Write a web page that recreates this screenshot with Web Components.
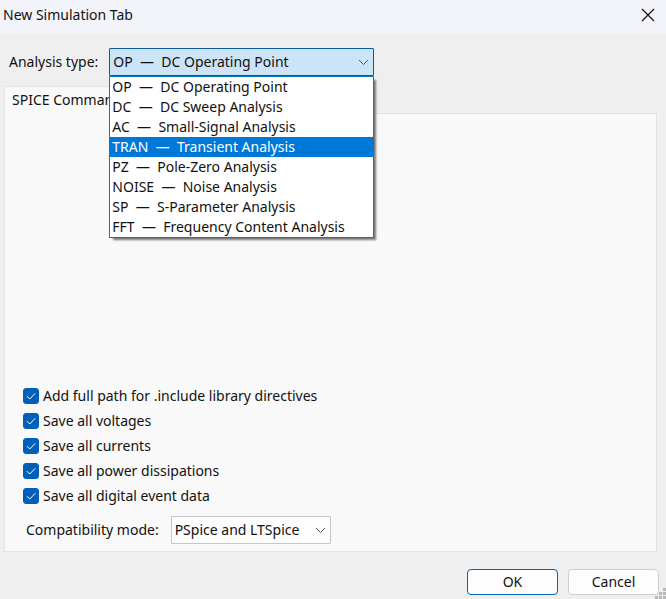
<!DOCTYPE html>
<html lang="en">
<head>
<meta charset="utf-8">
<title>New Simulation Tab</title>
<style>
html, body { height: 100%; }
body { margin: 0; background: #efefef; color: #111; font: 14px/20px "Noto Sans", "Open Sans", sans-serif; }
simulation-dialog { height: 100%; }
</style>
</head>
<body>
<simulation-dialog></simulation-dialog>
<script>
const define = (name, html, setup) => {
  const template = document.createElement('template');
  template.innerHTML = '<style>*{box-sizing:border-box}button,input,select{font:inherit;color:inherit;margin:0}</style>' + html;
  customElements.define(name, class extends HTMLElement {
    connectedCallback() {
      if (this.shadowRoot) return;
      const root = this.attachShadow({ mode: 'open' });
      root.append(template.content.cloneNode(true));
      if (setup) setup(this, root);
    }
  });
};

define('title-bar', `
<style>
:host { display: flex; align-items: center; justify-content: space-between; height: 34px; padding: 0 9px 4px 3px; background: #f3f4f9; }
h1 { margin: 0; font-size: 14px; line-height: 20px; font-weight: 400; }
button { display: flex; padding: 2px; border: 0; background: none; }
svg { fill: none; stroke: #111; stroke-width: 1.2; }
</style>
<h1><slot></slot></h1>
<button aria-label="Close"><svg width="14" height="14"><path d="M1 1L13 13M13 1L1 13"/></svg></button>`);

define('combo-box', `
<style>
:host { display: flex; align-items: center; gap: 12px; height: 28px; }
.field { position: relative; display: grid; align-items: center; height: 28px; width: var(--field-width, 160px); }
select { grid-area: 1 / 1; width: 100%; height: 28px; padding: 0 24px 0 3px; border: 1px solid #c6c6c6; border-radius: 1px; background: #fdfdfd; appearance: none; outline: 0; }
svg { grid-area: 1 / 1; justify-self: end; margin-right: 5px; fill: none; stroke: #555; pointer-events: none; }
:host([open]) select { background: #cce4f7; border-color: #0a5aa0; }
</style>
<label for="choice"></label>
<div class="field">
  <select id="choice"></select>
  <svg width="11" height="7"><path d="M1 1L5.500 5.500L10 1"/></svg>
  <slot></slot>
</div>`, (host, root) => {
  root.querySelector('label').textContent = host.getAttribute('label');
  root.querySelector('select').add(new Option(host.getAttribute('value')));
});

define('option-list', `
<style>
:host { position: absolute; z-index: 2; top: 100%; left: 0; right: 0; border: 1px solid #0a78b4; background: #fff; box-shadow: 3px 3px 2px -1px #777; }
</style>
<slot></slot>`, host => host.setAttribute('role', 'listbox'));

define('option-item', `
<style>
:host { display: block; height: 20px; padding-left: 2px; line-height: 20px; }
:host([active]) { background: #0078d7; color: #fff; }
slot { white-space: pre; }
</style>
<slot></slot>`, host => {
  host.setAttribute('role', 'option');
  host.setAttribute('aria-selected', host.hasAttribute('active'));
});

define('tab-panel', `
<style>
:host { display: flex; flex-direction: column; }
[role=tablist] { display: flex; height: 27px; }
button { margin-bottom: -1px; padding: 0 7px 2px; border: 1px solid #e3e3e3; border-bottom: 0; background: #f9f9f9; z-index: 1; }
[role=tabpanel] { flex: 1; display: flex; flex-direction: column; justify-content: flex-end; padding: 16px 18px 7px; border: 1px solid #e3e3e3; background: #f9f9f9; }
</style>
<div role="tablist"><button role="tab" id="tab" aria-selected="true"></button></div>
<div role="tabpanel" aria-labelledby="tab"><slot></slot></div>`, (host, root) => {
  root.querySelector('button').textContent = host.getAttribute('label');
});

define('check-item', `
<style>
:host { display: block; height: 25px; }
label { display: inline-flex; align-items: center; gap: 4px; height: 24px; }
.box { display: grid; }
input { grid-area: 1 / 1; width: 16px; height: 16px; appearance: none; border-radius: 3px; border: 1px solid #777; }
input:checked { background: #005fb8; border-color: #005fb8; }
svg { grid-area: 1 / 1; fill: none; stroke: #fff; pointer-events: none; }
</style>
<label><span class="box"><input type="checkbox" checked><svg width="16" height="16"><path d="M4 8.200L6.800 11L12.200 5.300"/></svg></span><slot></slot></label>`);

define('push-button', `
<style>
:host { display: block; width: 91px; }
button { display: block; width: 100%; height: 26px; padding: 0; border: 1px solid #cfcfcf; border-radius: 4px; background: #fdfdfd; }
:host([primary]) button { border-color: #0067b8; }
</style>
<button><slot></slot></button>`);

define('size-grip', `
<style>
:host { position: absolute; right: 0; bottom: 0; display: block; }
svg { display: block; fill: #b8b8b8; }
</style>
<svg width="11" height="11"><path d="M8 0h3v3h-3zM4 4h3v3h-3zM8 4h3v3h-3zM0 8h3v3h-3zM4 8h3v3h-3zM8 8h3v3h-3z"/></svg>`);

define('simulation-dialog', `
<style>
:host { position: relative; display: flex; flex-direction: column; }
.analysis { padding: 14px 9px 10px; --field-width: 265px; }
.analysis combo-box { gap: 11px; }
tab-panel { flex: 1; margin: 0 9px 0 4px; }
.mode { margin-top: 7px; padding-left: 3px; }
footer { display: flex; justify-content: flex-end; gap: 10px; padding: 17px 7px 4px; }
</style>
<title-bar>New Simulation Tab</title-bar>
<div class="analysis">
  <combo-box open label="Analysis type:" value="OP&nbsp; —&nbsp; DC Operating Point">
    <option-list><option-item>OP  —  DC Operating Point</option-item><option-item>DC  —  DC Sweep Analysis</option-item><option-item>AC  —  Small-Signal Analysis</option-item><option-item active>TRAN  —  Transient Analysis</option-item><option-item>PZ  —  Pole-Zero Analysis</option-item><option-item>NOISE  —  Noise Analysis</option-item><option-item>SP  —  S-Parameter Analysis</option-item><option-item>FFT  —  Frequency Content Analysis</option-item></option-list>
  </combo-box>
</div>
<tab-panel label="SPICE Command">
  <check-item>Add full path for .include library directives</check-item>
  <check-item>Save all voltages</check-item>
  <check-item>Save all currents</check-item>
  <check-item>Save all power dissipations</check-item>
  <check-item>Save all digital event data</check-item>
  <combo-box class="mode" label="Compatibility mode:" value="PSpice and LTSpice"></combo-box>
</tab-panel>
<footer>
  <push-button primary>OK</push-button>
  <push-button>Cancel</push-button>
</footer>
<size-grip></size-grip>`);
</script>
</body>
</html>
